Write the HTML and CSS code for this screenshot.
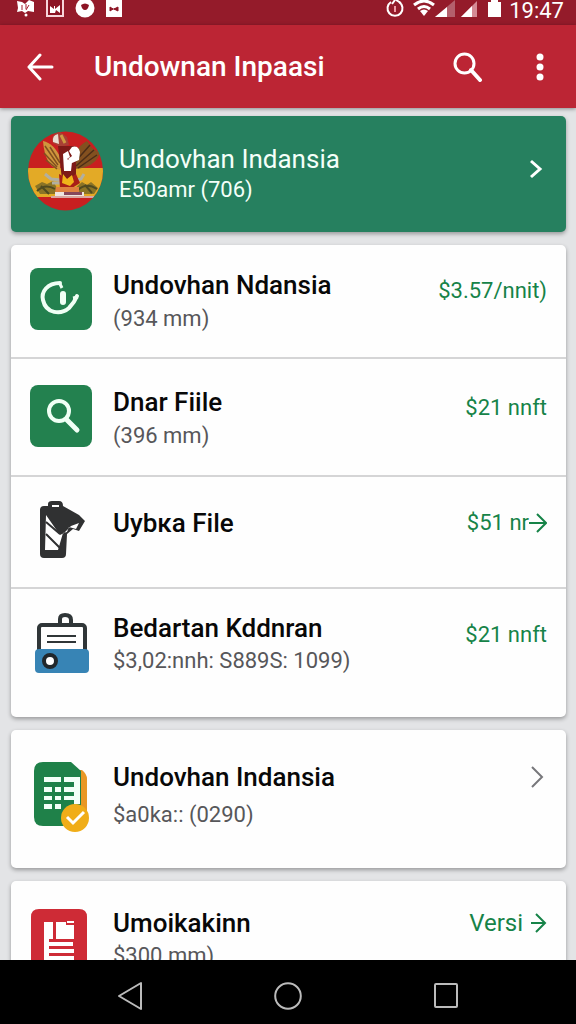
FILE: index.html
```html
<!DOCTYPE html>
<html lang="id">
<head>
<meta charset="utf-8">
<meta name="viewport" content="width=device-width, initial-scale=1">
<title>Undownan Inpaasi</title>
<link rel="stylesheet" href="styles.css">
</head>
<body>
<div class="status">
  <div class="status-group status-left">
    <svg width="19" height="18" viewBox="0 0 19 18"><path d="M1 1l5 1 3 2 4-4 5 2v10l-6-1-3 2-3-2-5 1 1-4z" fill="#fff"/><path d="M6 5v5M10 4v5M13 5l-3 5" stroke="#a51d2d"/><circle cx="10" cy="15" r="1.5" fill="#fff"/></svg>
    <svg width="18" height="18" viewBox="0 0 18 18"><path d="M1-1h16v17H1z" fill="#8c1424" stroke="#f7d5da" stroke-width="2"/><path d="M4 6l4 3V6h1v3l5-4v8l-4-3-1 3H4z" fill="#fff"/></svg>
    <svg width="20" height="18" viewBox="0 0 20 18"><circle cx="10" cy="8" r="9.500" fill="#fff"/><path d="M6 5q4-3 8 0-1 5-4 5-3 0-4-5z" fill="#8c1424"/></svg>
    <svg width="16" height="18" viewBox="0 0 16 18"><path d="M0 0h16v17H0z" fill="#fff"/><path d="M4 7v4l3-2zM12 7v4L8 9zM6 9h4" fill="#8c1424" stroke="#8c1424"/></svg>
  </div>
  <div class="status-group status-right">
    <svg class="timer" width="20" height="18" viewBox="0 0 20 18"><path d="M6 2a7.500 7.500 0 1 0 8 0" fill="none" stroke="#fff" stroke-width="2"/><path d="M10 0L7 4M11 0l5 3" stroke="#fff" stroke-width="2"/><path d="M10 6v6" stroke="#f09aa5" stroke-width="2"/></svg>
    <svg width="22" height="18" viewBox="0 0 22 18"><g fill="none" stroke="#fff" stroke-width="3"><path d="M1 5q10-8 20 0M5 9q6-5 12 0"/></g><path d="M7 11q4-3 8 0l-4 5z" fill="#fff"/></svg>
    <svg width="20" height="18" viewBox="0 0 20 18"><path d="M20 0v17H0z" fill="#b4606c"/><path d="M12 7v10H0z" fill="#fff"/></svg>
    <svg class="signal" width="16" height="18" viewBox="0 0 16 18"><path d="M16 1v16H0z" fill="#d58b95"/><path d="M11 6v11H0z" fill="#fff"/></svg>
    <svg class="battery" width="13" height="18" viewBox="0 0 13 18"><path d="M0 2h3V0h7v2h3v15H0z" fill="#fff"/></svg>
    <time>19:47</time>
  </div>
</div>

<header class="appbar">
  <button class="icon-button" aria-label="Kembali"><svg width="28" height="28" viewBox="0 0 28 28"><path d="M14 2L3 14l11 12M3 14h23" fill="none" stroke="#fff" stroke-width="3" stroke-linecap="round" stroke-linejoin="round"/></svg></button>
  <h1>Undownan Inpaasi</h1>
  <button class="icon-button" aria-label="Cari"><svg width="30" height="30" viewBox="0 0 30 30"><circle cx="11.500" cy="11.500" r="9.500" fill="none" stroke="#fff" stroke-width="3"/><path d="M18 18l9 10" stroke="#fff" stroke-width="4" stroke-linecap="round"/></svg></button>
  <button class="icon-button more" aria-label="Menu"><svg width="8" height="28" viewBox="0 0 8 28"><g fill="#fff"><circle cx="4" cy="4" r="3.500"/><circle cx="4" cy="14" r="3.500"/><circle cx="4" cy="24" r="3.500"/></g></svg></button>
</header>

<main class="content">
  <a class="card hero" href="#akun">
    <svg class="avatar" viewBox="0 0 75 80">
      <defs><clipPath id="disc"><ellipse cx="37.500" cy="40" rx="37.500" ry="39.500"/></clipPath></defs>
      <g clip-path="url(#disc)">
        <path d="M0 0h75v80H0z" fill="#c81f20"/><path d="M0 37h75v29H0z" fill="#e3aa26"/>
        <path d="M7 55l7-4 5 2 6-3 4 7 16 2 9-8 5 3 4-3 7 6-4 6H12z" fill="#8b7426"/>
        <path d="M9 60q8-8 18-2M50 59q8-8 19-1M13 55l8 8M57 54l7 8" stroke="#4f4a20" stroke-width="2" fill="none"/>
        <path d="M32 39Q17 36 15 10q11 2 18 18z" fill="#cf963d"/><path d="M17 15l13 19M16 22l13 14M22 16l10 16M18 29l11 9" stroke="#80501f" stroke-width="1.500"/>
        <path d="M46 37Q44 18 59 10l5 7 8 5q-5 15-26 16z" fill="#83501f"/><path d="M47 31l15-17M48 35l18-16M50 37l19-13" stroke="#4c2d17" stroke-width="1.500"/>
        <path d="M25 12Q22 3 32 1l7 5 2 8-9 2z" fill="#a84035"/><path d="M25 11q-1-7 5-8l1 10z" fill="#e9ddd2"/><path d="M33 4l4 8" stroke="#ce9a41" stroke-width="3"/>
        <path d="M30 15h18v33H34z" fill="#7e1a17"/>
        <path d="M44 16q6-2 8 5l-1 8-7 3-4-4 4-3-3-5zM35 23l5-3 2 6-3 2 5 3-1 9h-7z" fill="#fff"/>
        <path d="M17 43l6 5 10 1M56 43l-3 5-9 2M24 52h25" stroke="#b2afa0" stroke-width="3" fill="none"/>
        <path d="M31 43l9 5 8-5 4 9-8 5H32z" fill="#a91f17"/><path d="M35 43l4 5 5-4 2 7-4 4-8-3z" fill="#f1b319"/>
        <path d="M28 56h23v6H27z" fill="#df8140"/><path d="M27 61h29v5H27z" fill="#eee5df"/><path d="M36 61h18v3H36z" fill="#86485b"/><path d="M23 66h43" stroke="#d8a6a1" stroke-width="2"/>
      </g>
    </svg>
    <div class="text"><h2>Undovhan Indansia</h2><p>E50amr (706)</p></div>
    <svg class="chevron" width="14" height="20" viewBox="0 0 14 20"><path d="M2 2l9 8-9 8" fill="none" stroke="#fff" stroke-width="3"/></svg>
  </a>

  <section class="card list">
    <a class="row" href="#unduhan">
      <svg class="icon" viewBox="0 0 62 62"><rect width="62" height="62" rx="8" fill="#23814f"/><path d="M30 15C17 15 11 24 13 32c3 14 18 15 26 8 4-4 6-7 8-12" fill="none" stroke="#f0fff5" stroke-width="4" stroke-linecap="round"/><path d="M30 16l2 4M43 30l5-1" stroke="#f0fff5" stroke-width="3"/><path d="M33 26v8" stroke="#f0fff5" stroke-width="6" stroke-linecap="round"/></svg>
      <div class="text"><h2>Undovhan Ndansia</h2><p>(934 mm)</p></div>
      <span class="price">$3.57/nnit)</span>
    </a>
    <a class="row row-search" href="#cari">
      <svg class="icon" viewBox="0 0 62 62"><rect width="62" height="62" rx="8" fill="#23814f"/><circle cx="29" cy="26" r="10" fill="none" stroke="#f0fff5" stroke-width="4"/><path d="M37 35l10 10" stroke="#f0fff5" stroke-width="5" stroke-linecap="round"/></svg>
      <div class="text"><h2>Dnar Fiile</h2><p>(396 mm)</p></div>
      <span class="price">$21 nnft</span>
    </a>
    <a class="row row-file" href="#file">
      <svg class="icon" viewBox="0 0 62 62"><path d="M14 6h4v-2q0-3 4-3h7q4 0 4 5l16 9 6 6-6 10-6-2-6 5-1 20q0 4-4 4H14q-4 0-4-4V10q0-4 4-4z" fill="#303132"/><path d="M22 5h7v2h-7z" fill="#fff"/><path d="M16 15l14 20 4-2 7-7 8-3-3 6-7-2-2 5-4 1-5 17H15z" fill="#fff"/><path d="M16 22l14 12M16 34l15 15" stroke="#303132" stroke-width="2"/></svg>
      <div class="text"><h2>Uybкa File</h2></div>
      <span class="price">$51 nr<svg class="arrow" width="18" height="20" viewBox="0 0 18 20"><path d="M0 10h16M8 1l9 9-9 9" fill="none" stroke="currentColor" stroke-width="2"/></svg></span>
    </a>
    <a class="row row-records" href="#kaduran">
      <svg class="icon" viewBox="0 0 62 62"><path d="M30 12V7q0-4 5-4 6 0 6 5v5" fill="none" stroke="#303638" stroke-width="4"/><rect x="9" y="13" width="46" height="30" rx="3" fill="#fff" stroke="#303638" stroke-width="4"/><path d="M17 24h29M17 30h29" stroke="#303638" stroke-width="2"/><rect x="5" y="37" width="54" height="24" rx="4" fill="#3784b5"/><circle cx="20" cy="49" r="6" fill="#fff" stroke="#20272b" stroke-width="4"/></svg>
      <div class="text"><h2>Bedartan Kddnran</h2><p>$3,02:nnh: S889S: 1099)</p></div>
      <span class="price">$21 nnft</span>
    </a>
  </section>

  <a class="card row row-sheet" href="#indansia">
    <svg class="icon tall" viewBox="0 0 62 74"><path d="M45 10h7q5 4 5 9v38H35z" fill="#e99725"/><path d="M13 2h28l10 9v55H13q-9 0-9-9V11q0-9 9-9z" fill="#1f8149"/><g fill="#f4fff8"><path d="M14 17h17v5H14zM34 17h16v27h-6V22H34zM14 27h8v5h-8zM25 27h6v5h-6zM34 27h10v5H34zM14 36h8v4h-8zM25 36h6v4h-6zM34 36h10v4H34zM14 44h8v5h-8zM25 44h6v5h-6z"/></g><circle cx="45" cy="58" r="14" fill="#f0ad18"/><path d="M37 57l6 6 11-11" fill="none" stroke="#fff" stroke-width="3"/></svg>
    <div class="text"><h2>Undovhan Indansia</h2><p>$a0ka:: (0290)</p></div>
    <svg class="next" width="14" height="24" viewBox="0 0 14 24"><path d="M2 2l10 10L2 22" fill="none" stroke="#77777b" stroke-width="2"/></svg>
  </a>

  <a class="card row row-version" href="#versi">
    <svg class="icon" viewBox="0 0 62 62"><path d="M9 3h40q8 0 8 8v51H1V11q0-8 8-8z" fill="#ce2b36"/><path d="M14 16h9v17h-4v3h24v4H19v3h25v4H19v3h25v6H14z" fill="#fff"/><path d="M26 16h10v3h8v14H26z" fill="#fff"/><path d="M37 15h7v2h-7z" fill="#fff"/></svg>
    <div class="text"><h2>Umoikakinn</h2><p>$300 mm)</p></div>
    <span class="price version">Versi<svg class="arrow" width="16" height="20" viewBox="0 0 16 20"><path d="M0 10h14M5 1l9 9-9 9" fill="none" stroke="currentColor" stroke-width="2"/></svg></span>
  </a>
</main>

<nav class="navbar" aria-label="Sistem">
  <button class="icon-button" aria-label="Kembali"><svg width="28" height="30" viewBox="0 0 28 30"><path d="M25 2v26L3 15z" fill="none" stroke="#bbb" stroke-width="2" stroke-linejoin="round"/></svg></button>
  <button class="icon-button" aria-label="Beranda"><svg width="28" height="30" viewBox="0 0 28 30"><circle cx="14" cy="15" r="12.800" fill="none" stroke="#bbb" stroke-width="2"/></svg></button>
  <button class="icon-button" aria-label="Terbaru"><svg width="28" height="30" viewBox="0 0 28 30"><rect x="3" y="3" width="22" height="23" rx="1" fill="none" stroke="#bbb" stroke-width="2"/></svg></button>
</nav>
</body>
</html>
```
FILE: styles.css
```css
* { box-sizing: border-box; }

body {
  display: flex;
  flex-direction: column;
  height: 100vh;
  margin: 0;
  overflow: hidden;
  background: #e3e4e6;
  color: #080808;
  font-family: Roboto, "Liberation Sans", sans-serif;
}

h1, h2, p { margin: 0; }
a { color: inherit; text-decoration: none; }
svg { display: block; flex: none; }

.status {
  display: flex;
  flex: none;
  justify-content: space-between;
  height: 25px;
  padding: 0 12px 0 16px;
  background: #941b2a;
  color: #fff;
}
.status-group { display: flex; align-items: flex-start; }
.status-left { gap: 11px; }
.timer { margin-right: 8px; }
.signal { margin-left: 6px; }
.battery { margin: 0 8px 0 11px; }
.status time { font-size: 22px; line-height: 22px; }

.appbar {
  display: flex;
  align-items: center;
  flex: none;
  height: 83px;
  padding: 0 12px 0 16px;
  background: #bc2534;
  color: #fff;
  box-shadow: 0 1px 4px #0006;
  z-index: 1;
}
.appbar h1 {
  flex: 1;
  margin-left: 30px;
  font-size: 28px;
  font-weight: 500;
  line-height: 36px;
}
.icon-button {
  display: flex;
  align-items: center;
  justify-content: center;
  width: 48px;
  height: 48px;
  padding: 0;
  border: 0;
  background: none;
  cursor: pointer;
}
.more { margin-left: 24px; }

.content {
  display: flex;
  flex: 1;
  flex-direction: column;
  gap: 13px;
  min-height: 0;
  padding: 8px 10px 0 11px;
  overflow: hidden;
}
.card {
  flex: none;
  border-radius: 5px;
  background: #fefefe;
  box-shadow: 0 2px 4px #0005;
}

.hero {
  display: flex;
  align-items: flex-start;
  gap: 16px;
  padding: 15px 23px 21px 17px;
  background: #26805f;
  color: #f4fff9;
}
.avatar { width: 75px; height: 80px; }
.text { flex: 1; min-width: 0; }
.text h2 {
  font-size: 26px;
  font-weight: 500;
  line-height: 34px;
  white-space: nowrap;
}
.text p {
  color: #57575a;
  font-size: 22px;
  line-height: 34px;
  white-space: nowrap;
}
.hero .text { padding-top: 12px; }
.hero .text h2 { font-weight: 400; line-height: 32px; }
.hero .text p { color: inherit; line-height: 30px; }
.chevron { margin-top: 28px; }

.row {
  display: flex;
  align-items: flex-start;
  gap: 21px;
  padding: 23px 19px 20px;
}
.list .row { min-height: 112px; }
.list .row + .row { border-top: 2px solid #d5d5d6; }
.icon { width: 62px; height: 62px; }
.icon.tall { height: 74px; }
.price {
  display: flex;
  align-items: center;
  padding-top: 6px;
  color: #168348;
  font-size: 22px;
  line-height: 34px;
  white-space: nowrap;
}

.list .row-search { min-height: 118px; padding-top: 26px; }
.row-file .text { padding-top: 6px; }
.list .row-records { min-height: 130px; }
.row-records .text h2 { line-height: 32px; }

.row-sheet { min-height: 138px; padding: 30px 22px 30px 19px; }
.row-sheet .text p { padding-top: 4px; }
.next { margin-top: 5px; }
.row-version { padding-top: 25px; }
.row-version .text p { line-height: 32px; }
.version { gap: 8px; padding-top: 0; font-size: 24px; }

.navbar {
  display: flex;
  align-items: center;
  justify-content: center;
  flex: none;
  gap: 110px;
  height: 64px;
  padding-top: 7px;
  background: #000;
}
```
